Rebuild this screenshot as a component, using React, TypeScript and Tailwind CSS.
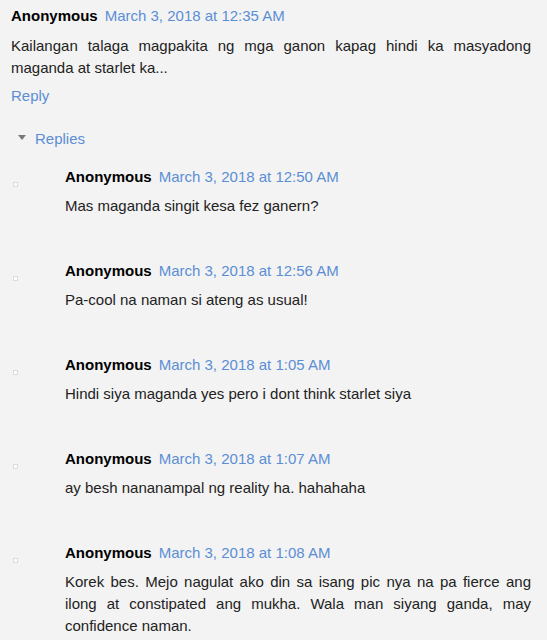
const font = { fontFamily: '"Liberation Sans", Arial, sans-serif' }

interface Reply {
  date: string
  body: string
}

const replies: Reply[] = [
  { date: "March 3, 2018 at 12:50 AM", body: "Mas maganda singit kesa fez ganern?" },
  { date: "March 3, 2018 at 12:56 AM", body: "Pa-cool na naman si ateng as usual!" },
  { date: "March 3, 2018 at 1:05 AM", body: "Hindi siya maganda yes pero i dont think starlet siya" },
  { date: "March 3, 2018 at 1:07 AM", body: "ay besh nananampal ng reality ha. hahahaha" },
  {
    date: "March 3, 2018 at 1:08 AM",
    body: "Korek bes. Mejo nagulat ako din sa isang pic nya na pa fierce ang ilong at constipated ang mukha. Wala man siyang ganda, may confidence naman.",
  },
]

function Header({ date }: { date: string }) {
  return (
    <div className="flex items-center gap-[7px] leading-[22px] text-[15px]">
      <span className="font-bold text-black">Anonymous</span>
      <span className="text-[#5b8ed5]">{date}</span>
    </div>
  )
}

function ReplyItem({ reply }: { reply: Reply }) {
  return (
    <div className="flex">
      <div className="w-[52px] shrink-0 pt-[16px]">
        <div className="w-[3px] h-[3px] bg-white border border-[#dcdcdc] box-content" />
      </div>
      <div className="flex-1 pr-[16px]">
        <Header date={reply.date} />
        <p className="mt-[7px] text-[15px] leading-[22px] text-[#222] text-justify">{reply.body}</p>
      </div>
    </div>
  )
}

export default function App() {
  return (
    <div className="w-[547px] h-[640px] bg-[#f3f3f3] overflow-hidden" style={font}>
      <div className="pl-[11px] pr-[16px] pt-[5px]">
        <Header date="March 3, 2018 at 12:35 AM" />
        <p className="mt-[8px] text-[15px] leading-[22px] text-[#222] text-justify">
          Kailangan talaga magpakita ng mga ganon kapag hindi ka masyadong maganda at starlet ka...
        </p>
        <div className="mt-[6px] text-[15px] leading-[22px] text-[#5b8ed5]">Reply</div>
      </div>
      <div className="mt-[21px] flex items-center pl-[18px] leading-[22px] text-[15px]">
        <svg width="8" height="5" viewBox="0 0 8 5" className="mr-[9px] -mt-[4px]">
          <path d="M0 0h8L4 5z" fill="#777" />
        </svg>
        <span className="text-[#5b8ed5]">Replies</span>
      </div>
      <div className="mt-[16px] pl-[13px] flex flex-col gap-[43px]">
        {replies.map((r, i) => (
          <ReplyItem key={i} reply={r} />
        ))}
      </div>
    </div>
  )
}
